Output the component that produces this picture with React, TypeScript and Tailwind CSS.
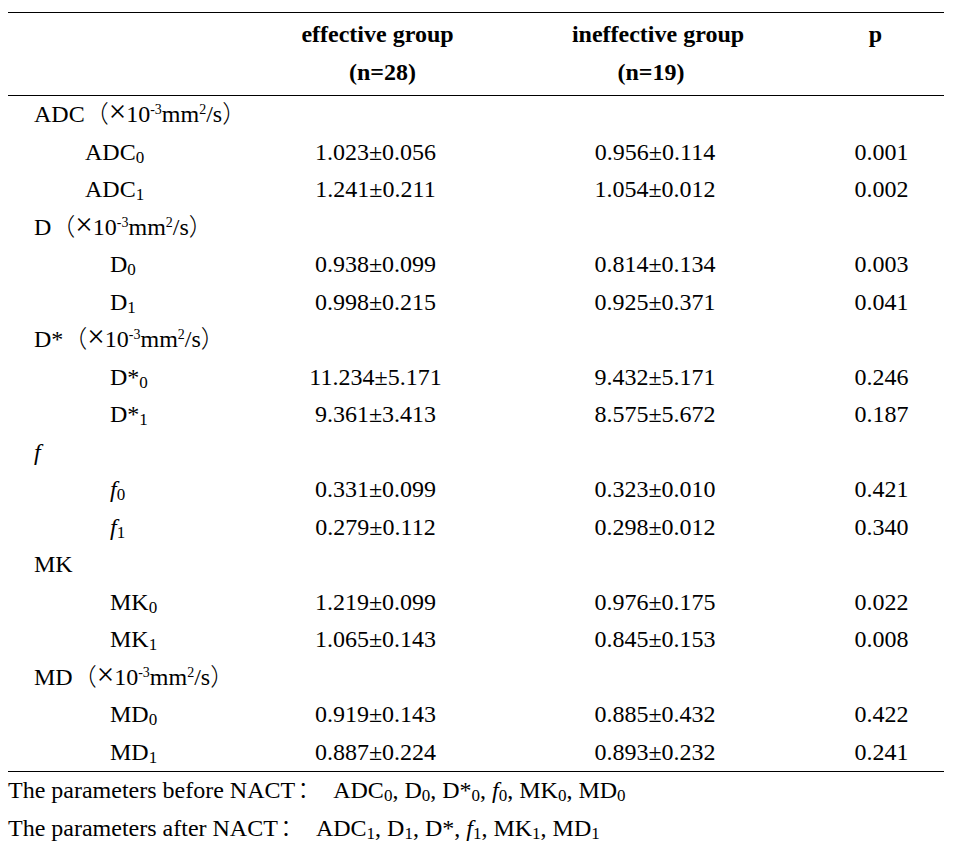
import React from 'react';

type Row = {
  label: React.ReactNode;
  indent: 'group' | 'adc' | 'sub';
  eff?: string;
  ineff?: string;
  p?: string;
};

// fullwidth punctuation in a CJK face, as in the source document
const Cjk = ({ children, className = '' }: { children: React.ReactNode; className?: string }) => (
  <span style={{ fontFamily: '"Noto Sans CJK SC", sans-serif' }} className={`font-light leading-none ${className}`}>
    {children}
  </span>
);

const Unit = () => (
  <span>
    <Cjk>（</Cjk>
    <span className="text-[31px] leading-none">×</span>10
    <sup className="text-[14px] top-[-0.55em]">-3</sup>mm
    <sup className="text-[14px] top-[-0.55em]">2</sup>/s<Cjk>）</Cjk>
  </span>
);

const Sub = ({ children }: { children: React.ReactNode }) => (
  <sub className="text-[17px] bottom-[-0.2em]">{children}</sub>
);

const ROWS: Row[] = [
  { label: <>ADC<Unit /></>, indent: 'group' },
  { label: <>ADC<Sub>0</Sub></>, indent: 'adc', eff: '1.023±0.056', ineff: '0.956±0.114', p: '0.001' },
  { label: <>ADC<Sub>1</Sub></>, indent: 'adc', eff: '1.241±0.211', ineff: '1.054±0.012', p: '0.002' },
  { label: <>D<Unit /></>, indent: 'group' },
  { label: <>D<Sub>0</Sub></>, indent: 'sub', eff: '0.938±0.099', ineff: '0.814±0.134', p: '0.003' },
  { label: <>D<Sub>1</Sub></>, indent: 'sub', eff: '0.998±0.215', ineff: '0.925±0.371', p: '0.041' },
  { label: <>D*<Unit /></>, indent: 'group' },
  { label: <>D*<Sub>0</Sub></>, indent: 'sub', eff: '11.234±5.171', ineff: '9.432±5.171', p: '0.246' },
  { label: <>D*<Sub>1</Sub></>, indent: 'sub', eff: '9.361±3.413', ineff: '8.575±5.672', p: '0.187' },
  { label: <i>f</i>, indent: 'group' },
  { label: <><i>f</i><Sub>0</Sub></>, indent: 'sub', eff: '0.331±0.099', ineff: '0.323±0.010', p: '0.421' },
  { label: <><i>f</i><Sub>1</Sub></>, indent: 'sub', eff: '0.279±0.112', ineff: '0.298±0.012', p: '0.340' },
  { label: <>MK</>, indent: 'group' },
  { label: <>MK<Sub>0</Sub></>, indent: 'sub', eff: '1.219±0.099', ineff: '0.976±0.175', p: '0.022' },
  { label: <>MK<Sub>1</Sub></>, indent: 'sub', eff: '1.065±0.143', ineff: '0.845±0.153', p: '0.008' },
  { label: <>MD<Unit /></>, indent: 'group' },
  { label: <>MD<Sub>0</Sub></>, indent: 'sub', eff: '0.919±0.143', ineff: '0.885±0.432', p: '0.422' },
  { label: <>MD<Sub>1</Sub></>, indent: 'sub', eff: '0.887±0.224', ineff: '0.893±0.232', p: '0.241' },
];

const INDENT = { group: 'pl-[26px]', adc: 'pl-[77px]', sub: 'pl-[102px]' };

export default function App() {
  return (
    <div
      className="w-[955px] h-[852px] bg-white text-black text-[24px] leading-[37.5px] pt-[12px]"
      style={{ fontFamily: '"Liberation Serif", "Times New Roman", serif' }}
    >
      <div className="ml-[8px] w-[936px]">
        <div className="h-px bg-black" />

        {/* header */}
        <div className="grid grid-cols-[232px_275px_286px_143px] font-bold pt-[3px] pb-[4px]">
          <div />
          <div className="text-center">
            <div>effective group</div>
            <div className="pl-[10px]">(n=28)</div>
          </div>
          <div className="text-center">
            <div>ineffective group</div>
            <div className="pr-[14px]">(n=19)</div>
          </div>
          <div className="text-center pl-[6px]">p</div>
        </div>

        <div className="h-px bg-black" />

        {/* body */}
        {ROWS.map((r, i) => (
          <div key={i} className="grid grid-cols-[232px_275px_286px_143px] h-[37.5px]">
            <div className={`${INDENT[r.indent]} whitespace-nowrap`}>{r.label}</div>
            <div className="text-center pr-[4px]">{r.eff}</div>
            <div className="text-center pr-[6px]">{r.ineff}</div>
            <div className="text-center pl-[18px]">{r.p}</div>
          </div>
        ))}

        <div className="h-px bg-black" />
      </div>

      {/* notes */}
      <div className="pl-[8px]">
        <div>
          The parameters before NACT<Cjk className="ml-[2px] mr-[12px]">：</Cjk>ADC<Sub>0</Sub>, D<Sub>0</Sub>,
          D*<Sub>0</Sub>, <i>f</i>
          <Sub>0</Sub>, MK<Sub>0</Sub>, MD<Sub>0</Sub>
        </div>
        <div>
          The parameters after NACT<Cjk className="ml-[2px] mr-[12px]">：</Cjk>ADC<Sub>1</Sub>, D<Sub>1</Sub>, D*,{' '}
          <i>f</i>
          <Sub>1</Sub>, MK<Sub>1</Sub>, MD<Sub>1</Sub>
        </div>
      </div>
    </div>
  );
}
